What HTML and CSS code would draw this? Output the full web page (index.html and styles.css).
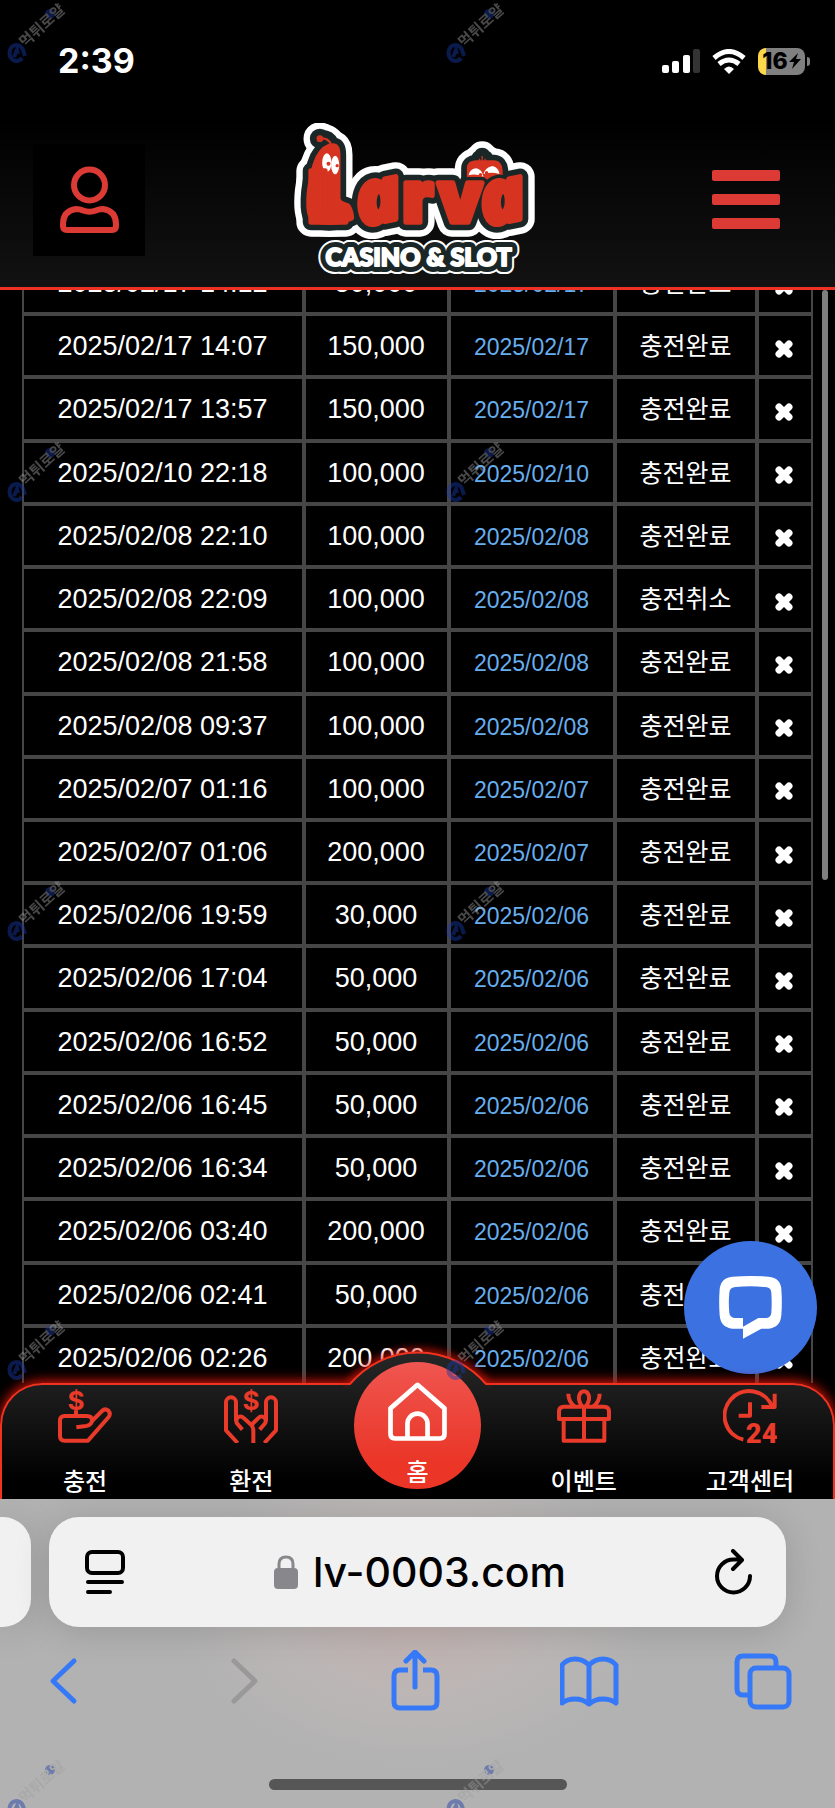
FILE: index.html
```html
<!DOCTYPE html>
<html lang="ko">
<head>
  <meta charset="UTF-8">
  <meta name="viewport" content="width=device-width, initial-scale=1.0">
  <title>Larva Casino &amp; Slot</title>
  <link rel="stylesheet" href="styles.css">
</head>
<body>

<div class="phone">

  <div class="statusbar">
    <span class="time">2:39</span>
    <div class="status-icons">
      <svg class="signal" viewBox="0 0 38 24">
        <rect x="0" y="16" width="7" height="8" rx="2"/>
        <rect x="10" y="12" width="7" height="12" rx="2"/>
        <rect x="21" y="6" width="7" height="18" rx="2"/>
        <rect class="off" x="31" y="0" width="7" height="24" rx="2"/>
      </svg>
      <svg class="wifi" viewBox="0 0 34 25">
        <path d="M2 9 Q17 -4 32 9" stroke-width="5"/>
        <path d="M7 15 Q17 7 27 15" stroke-width="5"/>
        <path d="M12 20 Q17 15 22 20 L17 25 Z" class="dot"/>
      </svg>
      <div class="battery"><span class="level">16</span><svg class="bolt" viewBox="0 0 12 16"><path d="M9 0 L0 9 H5 L3 16 L12 6 H7 Z"/></svg></div>
    </div>
  </div>

  <header class="header">
    <button class="user" aria-label="내 정보">
      <svg viewBox="0 0 59 67">
        <circle cx="29.500" cy="19" r="15.500"/>
        <path d="M16 43 Q20 43 23 44.500 Q29.500 47 36 44.500 Q39 43 43 43 Q56 45 56 58 V60 Q56 64 52 64 H7 Q3 64 3 60 V58 Q3 45 16 43 Z"/>
      </svg>
    </button>
    <a class="logo" href="#" aria-label="Larva Casino &amp; Slot">
      <svg viewBox="45 35 740 462">
        <defs>
          <g id="worms">
            <path d="M165 104 Q176 106 176 130 V262 Q178 274 190 278 L206 284 Q216 300 217 320 Q190 332 150 333 Q100 333 94 312 Q86 290 91 240 Q98 180 116 140 Q136 102 165 104 Z"/>
            <path d="M571 205 V170 Q572 156 590 155 H645 Q660 156 662 175 L664 205 Z"/>
          </g>
          <g id="arva">
            <text class="round" x="299" y="333" text-anchor="middle" transform="rotate(-12 299 275)">a</text>
            <text x="370" y="332">r</text>
            <text x="476" y="332">v</text>
            <text class="round" x="672" y="333" text-anchor="middle" transform="rotate(-12 672 275)">a</text>
          </g>
          <g id="letters">
            <text y="332" x="86">L</text>
            <use href="#arva"/>
          </g>
          <g id="antenna"><path d="M122 82 Q145 78 155 98"/><circle cx="122" cy="82" r="5"/></g>
          <path id="hair" d="M601 150 V142 M609 150 V134 M618 150 V142"/>
          <text id="sub" x="139" y="463">CASINO &amp; SLOT</text>
        </defs>
        <g class="rim">
          <use href="#worms"/><use href="#letters"/><use href="#antenna"/><use href="#hair"/>
        </g>
        <g class="edge">
          <use href="#worms"/><use href="#letters"/><use href="#antenna"/><use href="#hair"/>
        </g>
        <g class="body"><use href="#worms"/></g>
        <use href="#antenna" class="feeler"/>
        <use href="#hair" class="tuft"/>
        <g class="white">
          <ellipse cx="143" cy="154" rx="14" ry="28"/>
          <ellipse cx="168" cy="161" rx="12" ry="28"/>
          <path d="M568 192 Q572 172 592 171 Q608 174 613 196 Q590 186 568 192 Z"/>
          <path d="M613 188 Q618 168 640 164 Q658 168 661 188 Q636 180 613 188 Z"/>
        </g>
        <g class="red">
          <circle cx="122" cy="82" r="10"/>
          <circle cx="148" cy="157" r="6"/><circle cx="174" cy="163" r="5"/>
          <circle cx="604" cy="190" r="5"/><circle cx="622" cy="184" r="5"/>
        </g>
        <g class="front-edge"><use href="#arva"/></g>
        <g class="body"><use href="#letters"/></g>
        <use href="#sub" class="sub-rim"/>
        <use href="#sub" class="sub-edge"/>
        <use href="#sub" class="sub-text"/>
      </svg>
    </a>
    <button class="menu" aria-label="메뉴"><span></span><span></span><span></span></button>
  </header>

  <main class="content">
    <svg class="sprite"><symbol id="x" viewBox="0 0 18 18"><path d="M4 4 L14 14 M14 4 L4 14"/></symbol></svg>
    <table class="history">
      <colgroup><col class="c-time"><col class="c-amount"><col class="c-date"><col class="c-state"><col class="c-del"></colgroup>
      <tbody>
        <tr><td>2025/02/17 14:12</td><td>50,000</td><td class="date">2025/02/17</td><td class="state">충전완료</td><td class="del"><button aria-label="삭제"><svg><use href="#x"/></svg></button></td></tr>
        <tr><td>2025/02/17 14:07</td><td>150,000</td><td class="date">2025/02/17</td><td class="state">충전완료</td><td class="del"><button aria-label="삭제"><svg><use href="#x"/></svg></button></td></tr>
        <tr><td>2025/02/17 13:57</td><td>150,000</td><td class="date">2025/02/17</td><td class="state">충전완료</td><td class="del"><button aria-label="삭제"><svg><use href="#x"/></svg></button></td></tr>
        <tr><td>2025/02/10 22:18</td><td>100,000</td><td class="date">2025/02/10</td><td class="state">충전완료</td><td class="del"><button aria-label="삭제"><svg><use href="#x"/></svg></button></td></tr>
        <tr><td>2025/02/08 22:10</td><td>100,000</td><td class="date">2025/02/08</td><td class="state">충전완료</td><td class="del"><button aria-label="삭제"><svg><use href="#x"/></svg></button></td></tr>
        <tr><td>2025/02/08 22:09</td><td>100,000</td><td class="date">2025/02/08</td><td class="state">충전취소</td><td class="del"><button aria-label="삭제"><svg><use href="#x"/></svg></button></td></tr>
        <tr><td>2025/02/08 21:58</td><td>100,000</td><td class="date">2025/02/08</td><td class="state">충전완료</td><td class="del"><button aria-label="삭제"><svg><use href="#x"/></svg></button></td></tr>
        <tr><td>2025/02/08 09:37</td><td>100,000</td><td class="date">2025/02/08</td><td class="state">충전완료</td><td class="del"><button aria-label="삭제"><svg><use href="#x"/></svg></button></td></tr>
        <tr><td>2025/02/07 01:16</td><td>100,000</td><td class="date">2025/02/07</td><td class="state">충전완료</td><td class="del"><button aria-label="삭제"><svg><use href="#x"/></svg></button></td></tr>
        <tr><td>2025/02/07 01:06</td><td>200,000</td><td class="date">2025/02/07</td><td class="state">충전완료</td><td class="del"><button aria-label="삭제"><svg><use href="#x"/></svg></button></td></tr>
        <tr><td>2025/02/06 19:59</td><td>30,000</td><td class="date">2025/02/06</td><td class="state">충전완료</td><td class="del"><button aria-label="삭제"><svg><use href="#x"/></svg></button></td></tr>
        <tr><td>2025/02/06 17:04</td><td>50,000</td><td class="date">2025/02/06</td><td class="state">충전완료</td><td class="del"><button aria-label="삭제"><svg><use href="#x"/></svg></button></td></tr>
        <tr><td>2025/02/06 16:52</td><td>50,000</td><td class="date">2025/02/06</td><td class="state">충전완료</td><td class="del"><button aria-label="삭제"><svg><use href="#x"/></svg></button></td></tr>
        <tr><td>2025/02/06 16:45</td><td>50,000</td><td class="date">2025/02/06</td><td class="state">충전완료</td><td class="del"><button aria-label="삭제"><svg><use href="#x"/></svg></button></td></tr>
        <tr><td>2025/02/06 16:34</td><td>50,000</td><td class="date">2025/02/06</td><td class="state">충전완료</td><td class="del"><button aria-label="삭제"><svg><use href="#x"/></svg></button></td></tr>
        <tr><td>2025/02/06 03:40</td><td>200,000</td><td class="date">2025/02/06</td><td class="state">충전완료</td><td class="del"><button aria-label="삭제"><svg><use href="#x"/></svg></button></td></tr>
        <tr><td>2025/02/06 02:41</td><td>50,000</td><td class="date">2025/02/06</td><td class="state">충전완료</td><td class="del"><button aria-label="삭제"><svg><use href="#x"/></svg></button></td></tr>
        <tr><td>2025/02/06 02:26</td><td>200,000</td><td class="date">2025/02/06</td><td class="state">충전완료</td><td class="del"><button aria-label="삭제"><svg><use href="#x"/></svg></button></td></tr>
      </tbody>
    </table>
    <div class="scrollbar"></div>
    <button class="chat" aria-label="채팅 상담">
      <svg viewBox="0 0 189 189"><path fill-rule="evenodd" d="M40 2 Q94 -2 149 2 Q185 5 187 40 Q190 78 187 118 Q184 155 149 158 H127 L72 188 V158 H40 Q5 155 2 118 Q-1 78 2 40 Q5 5 40 2 Z M50 33 Q32 34 31 50 Q28 79 31 110 Q32 125 50 126 H72 V152 L118 126 H140 Q156 125 157 110 Q159 79 157 50 Q156 34 139 33 Q94 29 50 33 Z"/></svg>
    </button>
  </main>

  <nav class="tabs">
    <svg class="hump" viewBox="0 0 180 50">
      <defs>
        <linearGradient id="humpFill" x1="0" y1="0" x2="0" y2="1">
          <stop offset="0" stop-color="#262626"/><stop offset="1" stop-color="#1d1d1d"/>
        </linearGradient>
      </defs>
      <path class="arc-glow" d="M22 44 A89 89 0 0 1 158 44"/>
      <path class="arc-fill" d="M22 44 A89 89 0 0 1 158 44 L162 50 H18 Z"/>
      <path class="arc-line" d="M19 44 H22 A89 89 0 0 1 158 44 H161"/>
    </svg>
    <a class="tab" href="#">
      <svg viewBox="0 0 162 162">
        <text x="54" y="63" text-anchor="middle">$</text>
        <path d="M54 64 V80"/>
        <path d="M55 115 L84 111 Q102 108 102 94 Q102 81 86 81 H20 Q6 81 6 95 V141 Q6 155 20 155 H90 L152 84 Q159 74 151 65 Q141 57 132 66 L102 96"/>
      </svg>
      <span>충전</span>
    </a>
    <a class="tab" href="#">
      <svg viewBox="0 0 162 162">
        <text x="81" y="63" text-anchor="middle">$</text>
        <path d="M41 162 L6 124 V40 A15 15 0 0 1 36 40 V96"/>
        <path d="M55 122 L38 102 Q34 88 44 84 Q52 80 60 88 L82 108 Q88 114 88 124 V162"/>
        <path d="M121 162 L156 124 V40 A15 15 0 0 0 126 40 V96"/>
        <path d="M107 122 L124 102 Q128 88 118 84 Q110 80 102 88 L82 108"/>
      </svg>
      <span>환전</span>
    </a>
    <a class="tab home" href="#">
      <svg viewBox="0 0 188 188"><path d="M94 9 L180 84 V166 Q180 180 166 180 H22 Q8 180 8 166 V84 Z M62 180 V133 A32 32 0 0 1 126 133 V180"/></svg>
      <span>홈</span>
    </a>
    <a class="tab" href="#">
      <svg viewBox="0 0 162 162">
        <path d="M6 90 V68 Q6 53 21 53 H141 Q156 53 156 68 V90 Z M20 90 V155 H142 V90 M81 53 V155 M34 14 Q34 38 54 53 M128 14 Q128 38 108 53"/>
        <path d="M76 53 Q64 38 66 22 Q70 7 81 7 Q92 7 96 22 Q98 38 86 53"/>
      </svg>
      <span>이벤트</span>
    </a>
    <a class="tab" href="#">
      <svg viewBox="0 0 162 162">
        <path d="M61 152 A74 74 0 1 1 148 54 M155 14 V54 H115 M81 40 V80 H47"/>
        <text class="hours" x="116" y="161" text-anchor="middle">24</text>
      </svg>
      <span>고객센터</span>
    </a>
  </nav>

  <footer class="browser">
    <div class="address-row">
      <div class="prev-page"></div>
      <div class="address">
        <button aria-label="페이지 설정">
          <svg class="reader" viewBox="0 0 40 46"><rect x="2" y="3" width="36" height="21" rx="5"/><path d="M3 33 H37 M3 43 H25"/></svg>
        </button>
        <a class="url" href="#">
          <svg class="lock" viewBox="0 0 24 34"><rect x="0" y="13" width="24" height="21" rx="4"/><path d="M5 15 V9 Q5 2 12 2 Q19 2 19 9 V15"/></svg>
          lv-0003.com
        </a>
        <button aria-label="새로고침">
          <svg class="reload" viewBox="0 0 38 46"><path d="M35 27 A16.500 16.500 0 1 1 18.500 10.500 H26 M18 2 L27 11 L18 20"/></svg>
        </button>
      </div>
    </div>
    <div class="toolbar">
      <button aria-label="뒤로"><svg viewBox="0 0 60 62"><path d="M35 11 L14 31 L35 51"/></svg></button>
      <button class="disabled" aria-label="앞으로" disabled><svg viewBox="0 0 60 62"><path d="M21 11 L42 31 L21 51"/></svg></button>
      <button aria-label="공유"><svg viewBox="0 0 60 62"><path stroke-linecap="butt" d="M21 20 H13 Q7 20 7 26 V52 Q7 58 13 58 H44 Q50 58 50 52 V26 Q50 20 44 20 H36"/><path d="M28 37 V3 M19 11 L28 2 L37 11"/></svg></button>
      <button aria-label="책갈피"><svg viewBox="0 0 60 62"><path d="M29 15 Q23 9 15 9 Q7 9 2 15 V53 Q7 49 15 49 Q23 49 29 54 Q35 49 43 49 Q51 49 56 53 V15 Q51 9 43 9 Q35 9 29 15 V54"/></svg></button>
      <button aria-label="탭"><svg viewBox="0 0 60 62"><path d="M13 45 H9 Q3 45 3 39 V12 Q3 6 9 6 H36 Q42 6 42 12 V17"/><rect x="16" y="18" width="39" height="39" rx="6"/></svg></button>
    </div>
    <div class="home-indicator"></div>
  </footer>

  <svg class="sprite">
    <symbol id="mark" viewBox="0 0 70 70">
      <path class="ring" d="M22 58 A7 8 0 1 1 23 50 L25 56 M14 57 L17 50 L18 54"/>
      <circle class="ball" cx="50" cy="14" r="5"/>
      <text x="25" y="48" transform="rotate(-42 25 48)">먹튀로얄</text>
    </symbol>
  </svg>
  <div class="watermarks" aria-hidden="true">
    <svg><use href="#mark"/></svg><svg><use href="#mark"/></svg>
    <svg><use href="#mark"/></svg><svg><use href="#mark"/></svg>
    <svg><use href="#mark"/></svg><svg><use href="#mark"/></svg>
    <svg><use href="#mark"/></svg><svg><use href="#mark"/></svg>
    <svg><use href="#mark"/></svg><svg><use href="#mark"/></svg>
  </div>

</div>

</body>
</html>
```
FILE: styles.css
```css
* { box-sizing:border-box; }
body { margin:0; background:#000; color:#fff; font-family:"Liberation Sans", "Noto Sans CJK KR", sans-serif; }
button { padding:0; border:none; background:none; cursor:pointer; }
a { color:inherit; text-decoration:none; }
svg { display:block; }
.sprite { position:absolute; width:0; height:0; }
.phone { position:relative; display:flex; flex-direction:column; height:100vh; overflow:hidden; }

/* status bar */
.statusbar { display:flex; justify-content:space-between; align-items:center; height:120px; padding:2px 25px 0 58px; background:#000; }
.time { font:700 34px/40px Inter, sans-serif; }
.status-icons { display:flex; align-items:center; gap:12px; }
.signal { width:38px; height:24px; fill:#fff; }
.signal .off { fill:#333; }
.wifi { width:34px; height:25px; fill:none; stroke:#fff; }
.wifi .dot { fill:#fff; stroke:none; }
.battery { position:relative; display:flex; align-items:center; justify-content:center; gap:1px; width:47px; height:27px; margin-right:5px; border-radius:8px; background:linear-gradient(to right, #fbd84a 8px, #808080 8px); color:#000; }
.battery::after { content:""; position:absolute; right:-5px; top:9px; width:3px; height:9px; border-radius:0 3px 3px 0; background:#808080; }
.level { font:800 23px/27px Inter, sans-serif; }
.bolt { width:12px; height:16px; }

/* header */
.header { display:grid; grid-template-columns:1fr auto 1fr; align-items:center; height:170px; padding-bottom:8px; border-bottom:3px solid #ee3124; background:linear-gradient(#000, #121212); }
.user { display:flex; align-items:center; justify-content:center; width:112px; height:112px; margin-left:33px; background:#000; }
.user svg { width:59px; height:67px; fill:none; stroke:#dc3a35; stroke-width:6; }
.logo svg { width:247px; height:154px; }
.menu { justify-self:end; display:flex; flex-direction:column; gap:13px; width:68px; margin-right:55px; }
.menu span { height:11px; border-radius:2px; background:#dc3a35; }

.logo text { font-family:Inter, sans-serif; font-weight:900; font-size:212px; }
.logo .round { font-family:"Open Sans", "Noto Sans", sans-serif; font-weight:800; font-style:italic; font-size:224px; }
.logo #sub { font-family:Lato, sans-serif; font-size:75px; }
.rim, .edge, .body, .front-edge { stroke-linejoin:round; stroke-linecap:round; }
.rim { fill:#fff; stroke:#fff; stroke-width:88; }
.edge, .front-edge { fill:#1b2727; stroke:#1b2727; stroke-width:50; }
.front-edge { stroke-width:36; }
.body { fill:#d63420; stroke:#d63420; stroke-width:16; }
.feeler, .tuft { fill:none; stroke:#d63420; stroke-width:7; }
.tuft { stroke-width:4; }
.red { fill:#d63420; }
.white { fill:#fff; }
.sub-rim, .sub-edge, .sub-text { fill:#fff; stroke:#fff; stroke-width:48; stroke-linejoin:round; }
.sub-edge { fill:#1b2727; stroke:#1b2727; stroke-width:36; }
.sub-text { stroke-width:6; }

/* history */
.content { position:relative; flex:1; min-height:0; padding:0 22px; overflow:hidden; }
.history { width:100%; height:1138px; margin-top:-39px; border-collapse:separate; border-spacing:0; table-layout:fixed; }
.c-time { width:282px; }
.c-amount { width:145px; }
.c-date { width:166px; }
.c-state { width:142px; }
.c-del { width:56px; }
.history td { padding:15px 1px 13px 0; border:2px solid #464646; font-size:27px; line-height:30px; text-align:center; vertical-align:baseline; white-space:nowrap; }
.history .date { color:#67aeee; font-size:23px; }
.history .state { font-size:25px; }
.history .del { padding:6px 2px 0 0; vertical-align:middle; line-height:18px; }
.del button { display:block; margin:0 auto; }
.del svg { width:18px; height:18px; fill:none; stroke:#fff; stroke-width:7; stroke-linecap:round; }
.scrollbar { position:absolute; top:0; right:7px; width:6px; height:54%; border-radius:3px; background:#7f7f7f; }
.chat { position:absolute; right:18px; bottom:9px; display:flex; align-items:center; justify-content:center; width:133px; height:133px; border-radius:50%; background:#3b71e0; }
.chat svg { width:63px; height:63px; fill:#fff; }

/* bottom tabs */
.tabs { position:relative; display:grid; grid-template-columns:repeat(5, 1fr); height:116px; border:2px solid #f0321f; border-bottom:none; border-radius:42px 42px 0 0; background:linear-gradient(#1e1e1e, #000 85%); box-shadow:0 -2px 12px #e01508; }
.hump { position:absolute; left:50%; top:-45px; width:180px; height:50px; margin-left:-90px; }
.arc-glow { fill:none; stroke:#e01508; stroke-width:6; filter:blur(4px); }
.arc-fill { fill:url(#humpFill); }
.arc-line { fill:none; stroke:#f0321f; stroke-width:2; }
.tab { position:relative; display:flex; flex-direction:column; align-items:center; gap:19px; padding-top:4px; font:500 24px/36px "Noto Sans CJK KR", sans-serif; white-space:nowrap; }
.tab svg { width:54px; height:54px; fill:none; stroke:#ea3a2a; stroke-width:12; stroke-linejoin:round; }
.tab text { fill:#ea3a2a; stroke:none; font:700 78px Inter, sans-serif; }
.tab .hours { font:900 82px Roboto, sans-serif; }
.home { justify-self:center; width:127px; height:127px; margin-top:-23px; padding-top:20px; gap:12px; border-radius:50%; background:linear-gradient(#ef5650, #ea3527 80%); }
.home svg { width:63px; height:63px; stroke:#fff; stroke-width:15; }

/* browser bar */
.browser { position:relative; display:flex; flex-direction:column; align-items:center; height:309px; padding:18px 0; background:radial-gradient(ellipse 240px 160px at 50% 36%, #c3b2b0, rgba(190,184,183,0.7) 60%, rgba(178,178,178,0)), #b2b2b2; }
.address-row { display:flex; gap:18px; width:100%; padding-right:49px; }
.prev-page, .address { height:110px; background:#f1f1f1; box-shadow:0 4px 36px rgba(0,0,0,0.15); }
.prev-page { width:31px; border-radius:0 28px 28px 0; }
.address { flex:1; display:flex; align-items:center; justify-content:space-between; padding:0 33px 0 36px; border-radius:30px; color:#000; }
.url { display:flex; align-items:center; gap:15px; font:500 41px/50px Inter, sans-serif; }
.address svg { fill:none; stroke:#000; stroke-linecap:round; stroke-linejoin:round; }
.address .reader { width:40px; height:46px; stroke-width:4; }
.address .lock { width:24px; height:34px; fill:#88878c; stroke:none; }
.address .lock path { fill:none; stroke:#88878c; stroke-width:3; }
.address .reload { width:38px; height:46px; stroke-width:4; }
.toolbar { display:flex; justify-content:space-between; width:100%; margin-top:23px; padding:0 41px 0 39px; }
.toolbar svg { width:60px; height:62px; fill:none; stroke:#3579f8; stroke-width:5; stroke-linecap:round; stroke-linejoin:round; }
.toolbar .disabled svg { stroke:#999; }
.home-indicator { width:298px; height:11px; margin-top:auto; border-radius:6px; background:#565656; }

/* watermarks */
.watermarks { position:absolute; inset:0; display:grid; grid-template-columns:439px 439px; grid-auto-rows:439px; overflow:hidden; pointer-events:none; opacity:0.45; }
.watermarks svg { width:70px; height:70px; }
.ring { fill:none; stroke:#1a3aa8; stroke-width:4; }
.ball { fill:#1a3aa8; }
#mark text { fill:#a0a0a0; font:700 15px "Noto Sans CJK KR", sans-serif; }
```
